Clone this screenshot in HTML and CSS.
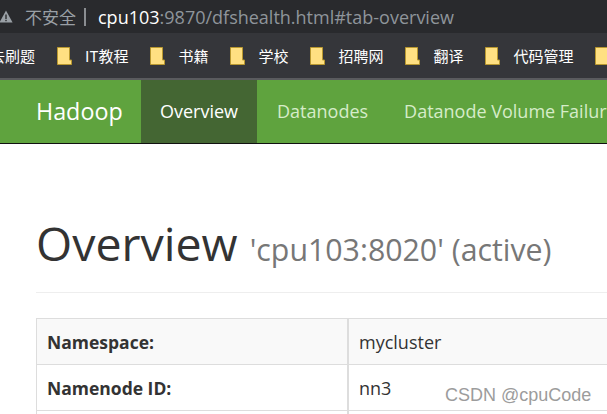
FILE: index.html
```html
<!DOCTYPE html>
<html lang="en">
<head>
  <meta charset="UTF-8" />
  <title>Namenode information</title>
  <link rel="stylesheet" href="styles.css">
</head>
<body>

<div class="addressbar">
  <svg class="warn" width="13" height="13" viewBox="0 0 13 13"><path d="M6 0.5 L12.6 12.5 L-0.6 12.5 Z" fill="#9aa0a6"/><rect x="5.3" y="4.5" width="1.4" height="4.5" fill="#292a2d"/><rect x="5.3" y="9.8" width="1.4" height="1.4" fill="#292a2d"/></svg>
  <span class="insecure">不安全</span>
  <span class="divider"></span>
  <span class="url"><span class="host">cpu103</span>:9870/dfshealth.html#tab-overview</span>
</div>

<div class="bookmarks">
  <span class="bookmark cut">去刷题</span>
  <span class="bookmark"><svg class="folder" width="15" height="18" viewBox="0 0 15 18"><path d="M0.5 0.5 H12.5 V13 H14.5 V17.5 H0.5 Z" fill="#ffe082" stroke="#b9982f"/></svg>IT教程</span>
  <span class="bookmark"><svg class="folder" width="15" height="18" viewBox="0 0 15 18"><path d="M0.5 0.5 H12.5 V13 H14.5 V17.5 H0.5 Z" fill="#ffe082" stroke="#b9982f"/></svg>书籍</span>
  <span class="bookmark"><svg class="folder" width="15" height="18" viewBox="0 0 15 18"><path d="M0.5 0.5 H12.5 V13 H14.5 V17.5 H0.5 Z" fill="#ffe082" stroke="#b9982f"/></svg>学校</span>
  <span class="bookmark"><svg class="folder" width="15" height="18" viewBox="0 0 15 18"><path d="M0.5 0.5 H12.5 V13 H14.5 V17.5 H0.5 Z" fill="#ffe082" stroke="#b9982f"/></svg>招聘网</span>
  <span class="bookmark"><svg class="folder" width="15" height="18" viewBox="0 0 15 18"><path d="M0.5 0.5 H12.5 V13 H14.5 V17.5 H0.5 Z" fill="#ffe082" stroke="#b9982f"/></svg>翻译</span>
  <span class="bookmark"><svg class="folder" width="15" height="18" viewBox="0 0 15 18"><path d="M0.5 0.5 H12.5 V13 H14.5 V17.5 H0.5 Z" fill="#ffe082" stroke="#b9982f"/></svg>代码管理</span>
  <span class="bookmark"><svg class="folder" width="15" height="18" viewBox="0 0 15 18"><path d="M0.5 0.5 H12.5 V13 H14.5 V17.5 H0.5 Z" fill="#ffe082" stroke="#b9982f"/></svg></span>
</div>

<nav class="navbar">
  <a class="brand" href="#">Hadoop</a>
  <a class="tab active" href="#">Overview</a>
  <a class="tab" href="#">Datanodes</a>
  <a class="tab" href="#">Datanode Volume Failures</a>
</nav>

<div class="content">
  <div class="page-header">
    <h1>Overview <small>'cpu103:8020' (active)</small></h1>
  </div>
  <table class="info">
    <tr><th>Namespace:</th><td>mycluster</td></tr>
    <tr><th>Namenode ID:</th><td>nn3</td></tr>
    <tr><th></th><td></td></tr>
  </table>
</div>

<div class="watermark">CSDN @cpuCode</div>

</body>
</html>
```

FILE: styles.css
```css
html, body { margin: 0; padding: 0; height: 414px; overflow: hidden; }
body { position: relative; width: 607px; background: #fff; font-family: "Open Sans", "Noto Sans CJK SC", sans-serif; color: #333; }
a { text-decoration: none; }

.addressbar { display: flex; align-items: center; height: 33px; background: #292a2d; white-space: nowrap; }
.warn { flex: none; }
.insecure { margin-left: 12px; font-size: 17px; color: #9aa0a6; font-family: "Noto Sans CJK SC", sans-serif; }
.divider { width: 2px; height: 18px; margin: 0 12px 0 8px; background: #8a8d91; }
.url { font-size: 18px; color: #8f959b; }
.host { color: #fff; }

.bookmarks { display: flex; align-items: center; gap: 22px; height: 45px; background: #35363a; border-bottom: 2px solid #5a5b5e; white-space: nowrap; font-family: "Noto Sans CJK SC", sans-serif; font-size: 15px; color: #fff; }
.bookmark { display: flex; align-items: center; }
.bookmark.cut { margin-left: -10px; }
.folder { margin-right: 13px; flex: none; }

.navbar { display: flex; height: 63px; background: #5fa33e; border-bottom: 1px solid #111; white-space: nowrap; }
.brand { flex: none; box-sizing: border-box; width: 141px; padding-left: 36px; line-height: 63px; font-size: 23.3px; color: #fff; }
.tab { padding: 0 18px; line-height: 63px; font-size: 18px; color: #d6ecc9; }
.tab.active { padding: 0 19px; margin-right: 2px; color: #fff; background: #446633; }

.content { padding: 0 0 0 36px; width: 700px; }
.page-header { margin-top: 74px; padding-bottom: 23px; border-bottom: 1px solid #eee; }
h1 { margin: 0; font-size: 46.5px; font-weight: 400; line-height: 1.1; color: #333; }
h1 small { font-size: 30.3px; color: #777; }

.info { margin-top: 25px; width: 100%; border-collapse: collapse; font-size: 18px; }
.info th, .info td { border: 1px solid #ddd; padding: 0 10px; height: 45px; text-align: left; }
.info th { width: 290px; font-size: 17.5px; font-weight: 700; }
.info td { border-left-width: 2px; }
.info tr:first-child th, .info tr:first-child td { background: #f9f9f9; }

.watermark { position: absolute; left: 445px; top: 385px; font-family: "Liberation Sans", sans-serif; font-size: 18px; color: #9c9c9c; }
```
